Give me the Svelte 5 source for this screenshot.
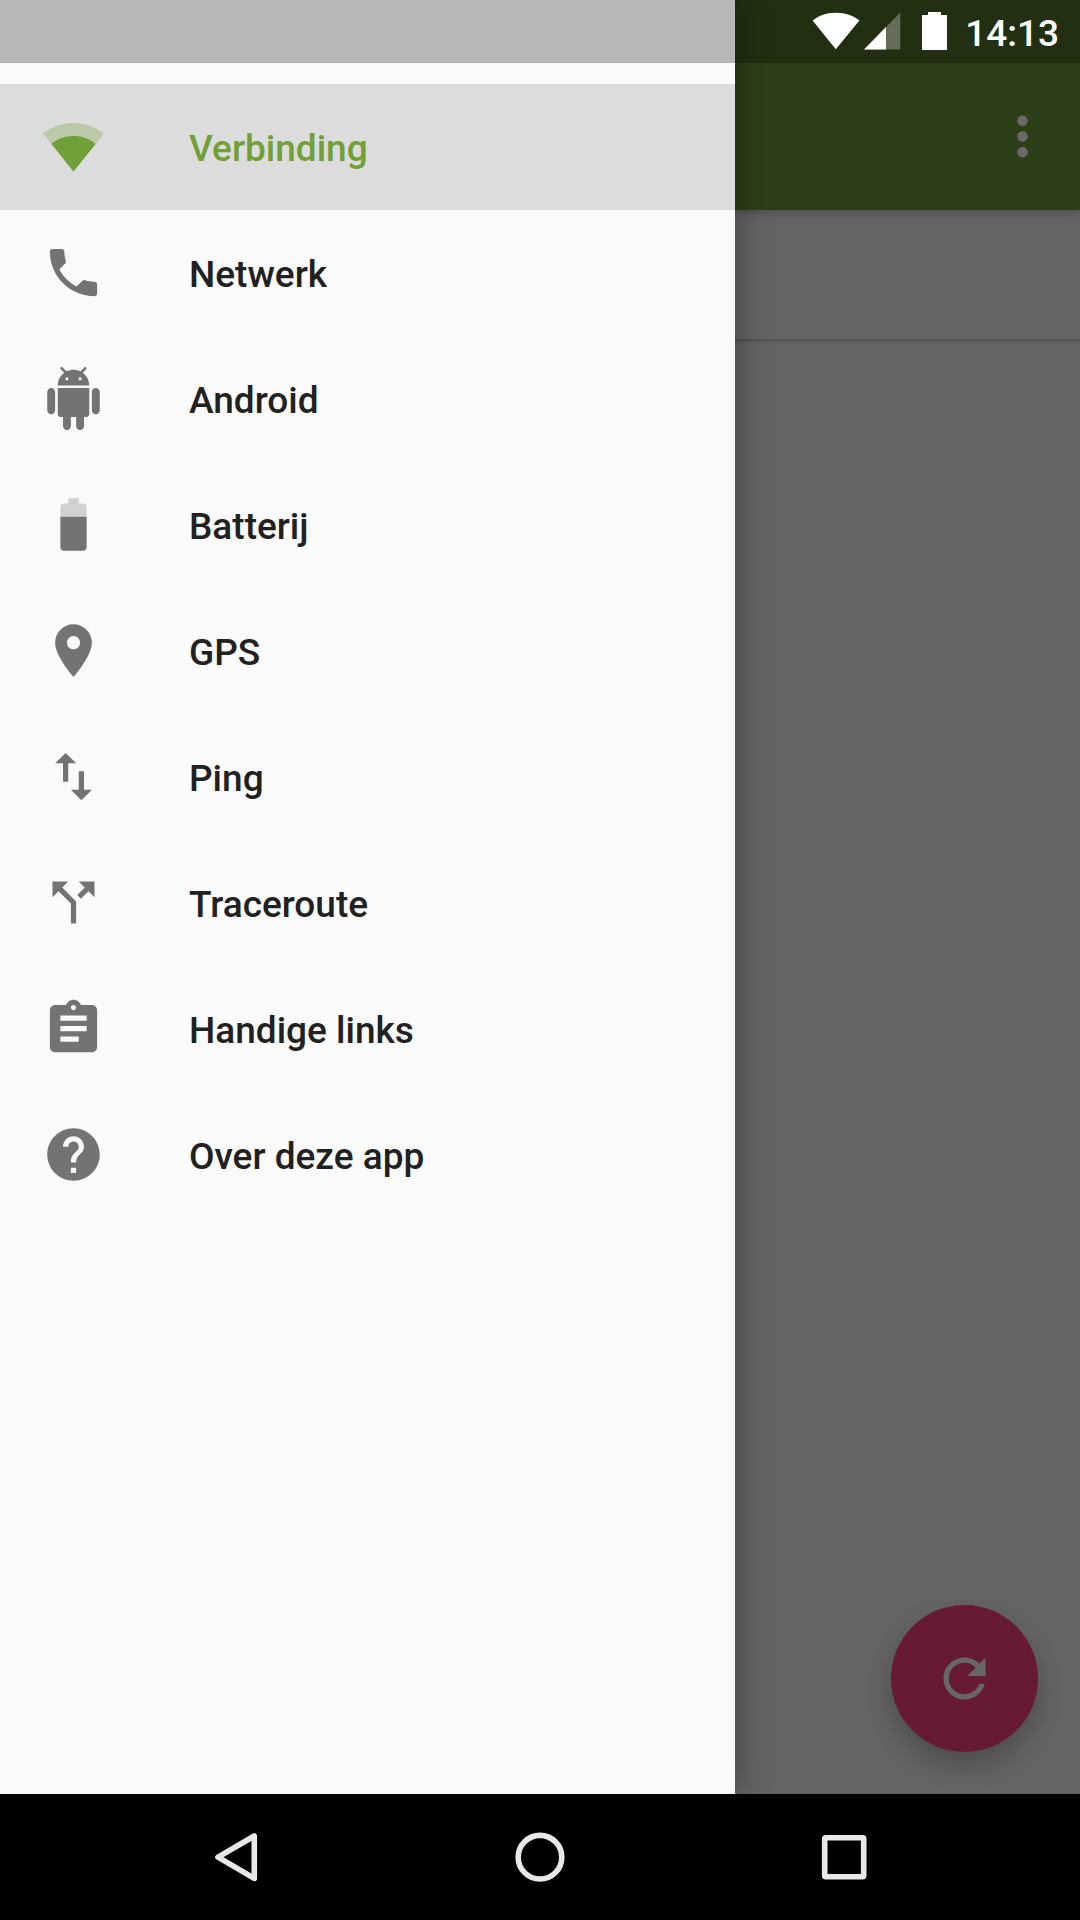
<script lang="ts">
	type Shape = { d: string; opacity?: number };
	type MenuItem = { label: string; icon: Shape[] };

	const items: MenuItem[] = [
		{
			label: 'Verbinding',
			icon: [
				{
					d: 'M12.01 21.49L23.64 7c-.45-.34-4.93-4-11.64-4C5.28 3 .81 6.66.36 7l11.63 14.49.01.01.01-.01z',
					opacity: 0.3
				},
				{
					d: 'M3.53 10.95l8.46 10.54.01.01.01-.01 8.46-10.54C20.04 10.62 16.81 8 12 8c-4.81 0-8.04 2.62-8.47 2.95z'
				}
			]
		},
		{
			label: 'Netwerk',
			icon: [
				{
					d: 'M6.62 10.79c1.44 2.83 3.76 5.14 6.59 6.59l2.2-2.2c.27-.27.67-.36 1.02-.24 1.12.37 2.33.57 3.57.57.55 0 1 .45 1 1V20c0 .55-.45 1-1 1-9.39 0-17-7.61-17-17 0-.55.45-1 1-1h3.5c.55 0 1 .45 1 1 0 1.25.2 2.45.57 3.57.11.35.03.74-.25 1.02l-2.2 2.2z'
				}
			]
		},
		{
			label: 'Android',
			icon: [
				{
					d: 'M6 18c0 .55.45 1 1 1h1v3.5c0 .83.67 1.5 1.5 1.5s1.5-.67 1.5-1.5V19h2v3.5c0 .83.67 1.5 1.5 1.5s1.5-.67 1.5-1.5V19h1c.55 0 1-.45 1-1V8H6v10zM3.5 8C2.67 8 2 8.67 2 9.5v7c0 .83.67 1.5 1.5 1.5S5 17.33 5 16.5v-7C5 8.67 4.33 8 3.5 8zm17 0c-.83 0-1.5.67-1.5 1.5v7c0 .83.67 1.5 1.5 1.5s1.5-.67 1.5-1.5v-7c0-.83-.67-1.5-1.5-1.5zm-4.97-5.84l1.3-1.3c.2-.2.2-.51 0-.71-.2-.2-.51-.2-.71 0l-1.48 1.48C13.85 1.23 12.95 1 12 1c-.96 0-1.86.23-2.66.63L7.85.15c-.2-.2-.51-.2-.71 0-.2.2-.2.51 0 .71l1.31 1.31C6.97 3.26 6 5.01 6 7h12c0-1.99-.97-3.75-2.47-4.84zM10 5H9V4h1v1zm5 0h-1V4h1v1z'
				}
			]
		},
		{
			label: 'Batterij',
			icon: [
				{
					d: 'M17 5.33C17 4.6 16.4 4 15.67 4H14V2h-4v2H8.33C7.6 4 7 4.6 7 5.33V9h10V5.33z',
					opacity: 0.3
				},
				{ d: 'M7 9v11.67C7 21.4 7.6 22 8.33 22h7.33c.74 0 1.34-.6 1.34-1.33V9H7z' }
			]
		},
		{
			label: 'GPS',
			icon: [
				{
					d: 'M12 2C8.13 2 5 5.13 5 9c0 5.25 7 13 7 13s7-7.75 7-13c0-3.87-3.13-7-7-7zm0 9.5c-1.38 0-2.5-1.12-2.5-2.5s1.12-2.5 2.5-2.5 2.5 1.12 2.5 2.5-1.12 2.5-2.5 2.5z'
				}
			]
		},
		{
			label: 'Ping',
			icon: [
				{ d: 'M16 17.01V10h-2v7.01h-3L15 21l4-3.99h-3zM9 3L5 6.99h3V14h2V6.99h3L9 3z' }
			]
		},
		{
			label: 'Traceroute',
			icon: [
				{
					d: 'M14 4l2.29 2.29-2.88 2.88 1.42 1.42 2.88-2.88L20 10V4zm-4 0H4v6l2.29-2.29 4.71 4.7V20h2v-8.41l-5.29-5.3z'
				}
			]
		},
		{
			label: 'Handige links',
			icon: [
				{
					d: 'M19 3h-4.18C14.4 1.84 13.3 1 12 1c-1.3 0-2.4.84-2.82 2H5c-1.1 0-2 .9-2 2v14c0 1.1.9 2 2 2h14c1.1 0 2-.9 2-2V5c0-1.1-.9-2-2-2zm-7 0c.55 0 1 .45 1 1s-.45 1-1 1-1-.45-1-1 .45-1 1-1zm2 14H7v-2h7v2zm3-4H7v-2h10v2zm0-4H7V7h10v2z'
				}
			]
		},
		{
			label: 'Over deze app',
			icon: [
				{
					d: 'M12 2C6.48 2 2 6.48 2 12s4.48 10 10 10 10-4.48 10-10S17.52 2 12 2zm1 17h-2v-2h2v2zm2.07-7.75l-.9.92C13.45 12.9 13 13.5 13 15h-2v-.5c0-1.1.45-2.1 1.17-2.83l1.24-1.26c.37-.36.59-.86.59-1.41 0-1.1-.9-2-2-2s-2 .9-2 2H8c0-2.21 1.79-4 4-4s4 1.79 4 4c0 .88-.36 1.68-.93 2.25z'
				}
			]
		}
	];

	let selected = $state('Verbinding');
</script>

<svelte:head>
	<title>Verbinding</title>
</svelte:head>

<div class="screen">
	<div class="app">
		<nav class="drawer">
			<div class="drawer-status"></div>
			<div class="menu">
				{#each items as item}
					<button
						class="item"
						class:selected={item.label === selected}
						onclick={() => (selected = item.label)}
					>
						<svg class="icon" viewBox="0 0 24 24">
							{#each item.icon as shape}
								<path d={shape.d} opacity={shape.opacity ?? 1} />
							{/each}
						</svg>
						<span>{item.label}</span>
					</button>
				{/each}
			</div>
		</nav>

		<main class="content">
			<div class="status-bar">
				<svg class="status-icons" viewBox="0 0 140 63">
					<path d="M35.8 49.3L59.4 20.6C54 16 46 12.8 35.8 12.8S18 16 12.6 20.6z" />
					<path d="M100.3 12.5V49.5H64z" opacity="0.3" />
					<path d="M86 27V49.5H64z" />
					<path d="M122 15h6v-3h13v3h6v35h-25z" />
				</svg>
				<span class="clock">14:13</span>
			</div>
			<header class="toolbar">
				<svg class="icon" viewBox="0 0 24 24">
					<path
						d="M12 8c1.1 0 2-.9 2-2s-.9-2-2-2-2 .9-2 2 .9 2 2 2zm0 2c-1.1 0-2 .9-2 2s.9 2 2 2 2-.9 2-2-.9-2-2-2zm0 6c-1.1 0-2 .9-2 2s.9 2 2 2 2-.9 2-2-.9-2-2-2z"
					/>
				</svg>
			</header>
			<div class="panel"></div>
			<div class="page">
				<button class="fab" aria-label="Vernieuwen">
					<svg class="icon" viewBox="0 0 24 24">
						<path
							d="M17.65 6.35C16.2 4.9 14.21 4 12 4c-4.42 0-7.99 3.58-7.99 8s3.57 8 7.99 8c3.73 0 6.84-2.55 7.73-6h-2.08c-.82 2.33-3.04 4-5.65 4-3.31 0-6-2.69-6-6s2.69-6 6-6c1.66 0 3.14.69 4.22 1.78L13 11h7V4l-2.35 2.35z"
						/>
					</svg>
				</button>
			</div>
		</main>
	</div>

	<div class="nav-bar">
		<svg viewBox="0 0 63 63">
			<path d="M49.3 10V52.4L13 31.2z" />
		</svg>
		<svg viewBox="0 0 63 63">
			<circle cx="31" cy="31.2" r="21.8" />
		</svg>
		<svg viewBox="0 0 63 63">
			<rect x="11.7" y="11.7" width="39" height="39" rx="1" />
		</svg>
	</div>
</div>

<style>
	:global(body) {
		margin: 0;
		background: #000;
	}

	.screen {
		display: flex;
		flex-direction: column;
		width: 1080px;
		height: 1920px;
		overflow: hidden;
		font-family: Roboto, 'Liberation Sans', sans-serif;
		font-weight: 500;
		font-size: 37px;
	}

	button {
		border: 0;
		padding: 0;
		font: inherit;
		text-align: left;
		cursor: pointer;
	}

	.icon {
		display: block;
		width: 63px;
		height: 63px;
		flex: none;
		fill: currentColor;
	}

	.app {
		display: flex;
		flex: 1;
		min-height: 0;
		overflow: hidden;
	}

	.drawer {
		position: relative;
		z-index: 1;
		width: 735px;
		flex: none;
		background: #fafafa;
		box-shadow: 0 0 34px rgba(0, 0, 0, 0.36);
	}

	.drawer-status {
		height: 63px;
		background: #b7b7b7;
	}

	.menu {
		display: flex;
		flex-direction: column;
		padding-top: 21px;
	}

	.item {
		display: flex;
		align-items: center;
		gap: 84px;
		height: 126px;
		padding: 0 42px;
		background: none;
		color: #737373;
	}

	.item .icon {
		margin-bottom: 1px;
	}

	.item span {
		color: #212121;
		line-height: 44px;
		margin-top: 4px;
	}

	.item.selected {
		background: #dcdcdc;
	}

	.item.selected,
	.item.selected span {
		color: #719f38;
	}

	.content {
		display: flex;
		flex-direction: column;
		flex: 1;
		background: #646464;
	}

	.status-bar {
		display: flex;
		align-items: center;
		justify-content: flex-end;
		height: 63px;
		padding-right: 21px;
		background: #222f12;
		color: #fff;
	}

	.status-icons {
		width: 140px;
		height: 63px;
		margin-right: 25px;
		fill: #fff;
		overflow: visible;
	}

	.clock {
		line-height: 44px;
		margin-top: 4px;
	}

	.toolbar {
		display: flex;
		align-items: center;
		justify-content: flex-end;
		height: 147px;
		padding-right: 26px;
		background: #2d3f18;
		color: #6a6a6a;
		box-shadow: 0 3px 9px rgba(0, 0, 0, 0.22);
	}

	.panel {
		height: 129px;
		border-bottom: 3px solid #565656;
	}

	.page {
		display: flex;
		flex: 1;
		align-items: flex-end;
		justify-content: flex-end;
		padding: 42px;
	}

	.fab {
		display: flex;
		align-items: center;
		justify-content: center;
		width: 147px;
		height: 147px;
		border-radius: 50%;
		background: #661a34;
		color: #676767;
		box-shadow: 0 13px 26px rgba(0, 0, 0, 0.24);
	}

	.nav-bar {
		display: flex;
		align-items: center;
		justify-content: space-between;
		height: 126px;
		padding: 0 204px 0 205px;
		background: #000;
	}

	.nav-bar svg {
		width: 63px;
		height: 63px;
		fill: none;
		stroke: #e8e8e8;
		stroke-width: 5.6;
		stroke-linejoin: round;
	}
</style>
